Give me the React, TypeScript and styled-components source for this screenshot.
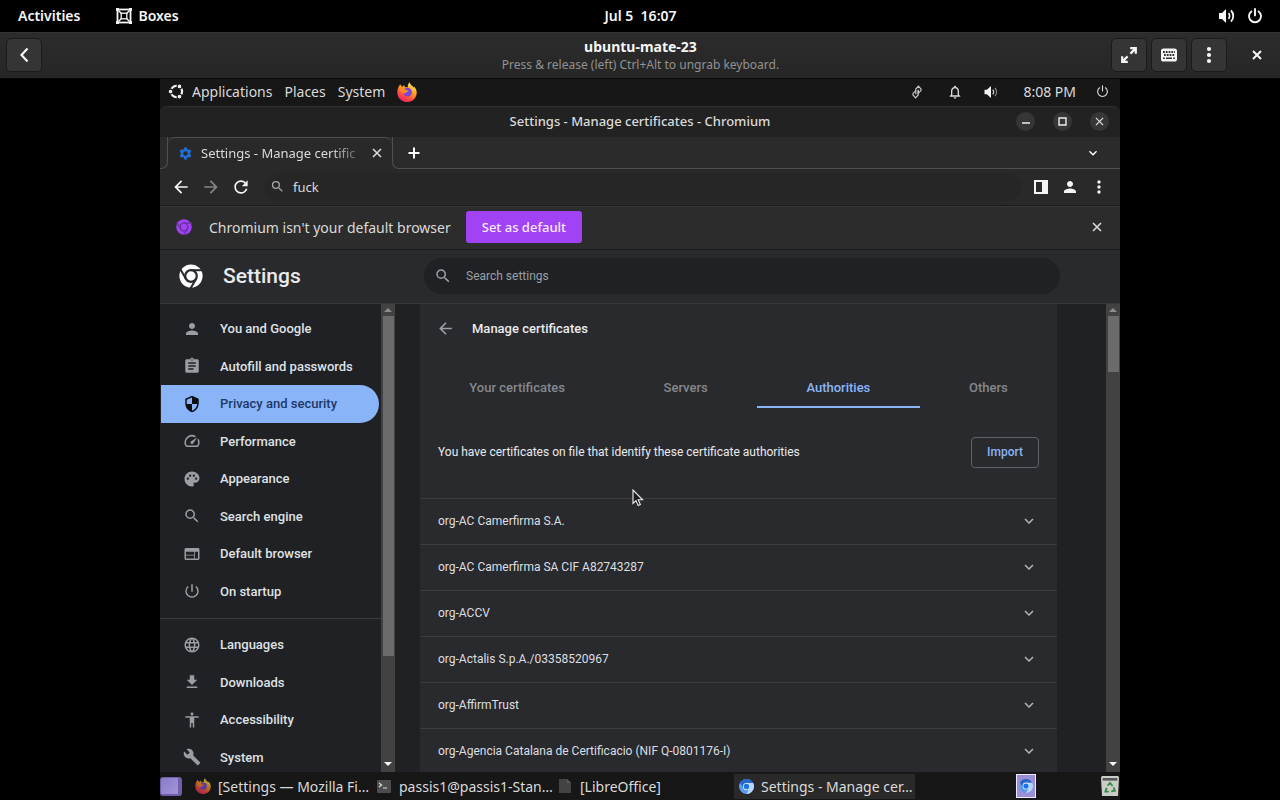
import React from "react";
import styled, { createGlobalStyle, css } from "styled-components";
import {
  MdPerson, MdAssignment, MdSecurity, MdSpeed, MdPalette, MdSearch, MdWeb,
  MdPowerSettingsNew, MdLanguage, MdDownload, MdAccessibility, MdBuild,
  MdArrowBack, MdArrowForward, MdRefresh, MdExpandMore,
  MdMoreVert, MdSettings, MdNotificationsNone,
} from "react-icons/md";
import type { IconType } from "react-icons";

const GNOME = `"Noto Sans", "Open Sans", sans-serif`;
const MATE = `"Noto Sans", "Open Sans", sans-serif`;
const WEB = `Roboto, "Liberation Sans", sans-serif`;

const GlobalStyle = createGlobalStyle`
  * { box-sizing: border-box; }
  body { margin: 0; background: #000; }
  button, input { font: inherit; color: inherit; background: none; border: 0; padding: 0; margin: 0; outline: 0; }
  h1, h2, p, ul { margin: 0; padding: 0; font: inherit; }
  ul { list-style: none; }
  a { color: inherit; text-decoration: none; }
  svg { display: block; flex: none; }
`;

/* ---------- host desktop ---------- */

const Desktop = styled.div`
  display: flex;
  flex-direction: column;
  height: 100vh;
  overflow: hidden;
  background: #000;
  color: #f6f6f6;
  font-family: ${GNOME};
`;

const ThreeColumns = css`
  display: grid;
  grid-template-columns: 1fr auto 1fr;
  align-items: center;
`;

const TopBar = styled.header`
  ${ThreeColumns}
  flex: none;
  height: 32px;
  padding: 0 17px 1px 18px;
  font-size: 14px;
  font-weight: 600;
  white-space: pre;
`;

const Cluster = styled.div<{ $gap: number; $end?: boolean }>`
  display: flex;
  align-items: center;
  gap: ${(p) => p.$gap}px;
  justify-content: ${(p) => (p.$end ? "flex-end" : "flex-start")};
`;

const TopButton = styled.button`
  display: flex;
  align-items: center;
  gap: 6px;
  font-weight: 600;
`;

const HeaderBar = styled.div`
  ${ThreeColumns}
  flex: none;
  height: 47px;
  padding: 0 5px 0 6px;
  background: linear-gradient(#2c2c2c, #262626);
  border-top: 1px solid #343434;
  border-bottom: 1px solid #070707;
`;

const BoxTitle = styled.div`
  display: flex;
  flex-direction: column;
  align-items: center;
`;

const BoxName = styled.h1`
  font-size: 14px;
  line-height: 18px;
  font-weight: 700;
`;

const BoxHint = styled.p`
  font-size: 12px;
  line-height: 18px;
  color: #919191;
`;

const HeaderButton = styled.button<{ $flat?: boolean }>`
  display: flex;
  align-items: center;
  justify-content: center;
  width: 36px;
  height: 34px;
  margin-bottom: 2px;
  margin-left: ${(p) => (p.$flat ? 8 : 0)}px;
  border-radius: 5px;
  border: 1px solid ${(p) => (p.$flat ? "transparent" : "#1b1b1b")};
  background: ${(p) => (p.$flat ? "transparent" : "#353535")};
`;

/* ---------- guest desktop ---------- */

const Guest = styled.main`
  display: flex;
  flex-direction: column;
  flex: 1;
  min-height: 0;
  width: 75%;
  margin: 0 auto;
  background: #171717;
  color: #dadada;
  font-family: ${MATE};
  font-size: 14px;
`;

const MatePanel = styled.div`
  display: flex;
  flex: none;
  align-items: center;
  justify-content: space-between;
  height: 27px;
  padding: 0 11px 2px 8px;
`;

const PanelButton = styled.button`
  display: flex;
  align-items: center;
  gap: 7px;
`;

const Clock = styled.span`
  margin-left: 4px;
`;

const Window = styled.section`
  display: flex;
  flex-direction: column;
  flex: 1;
  min-height: 0;
  overflow: hidden;
  border-radius: 6px 6px 0 0;
  background: #202124;
`;

const TitleBar = styled.div`
  ${ThreeColumns}
  flex: none;
  height: 31px;
  padding: 0 11px 2px;
  background: #222;
  border-top: 1px solid #303030;
  font-size: 13px;
  font-weight: 500;
`;

const WindowButton = styled.button`
  display: flex;
  align-items: center;
  justify-content: center;
  width: 19px;
  height: 19px;
  border-radius: 50%;
  background: #363636;
`;

const TabStrip = styled.div`
  display: flex;
  flex: none;
  align-items: stretch;
  height: 32px;
  background: #2b2b2b;
  font-size: 13px;
`;

const StripEdge = styled.div`
  width: 8px;
  border: solid #505050;
  border-width: 0 1px 1px 0;
  border-radius: 0 0 7px 0;
`;

const StripRest = styled.div`
  display: flex;
  flex: 1;
  align-items: center;
  justify-content: space-between;
  padding: 0 19px 0 15px;
  border: solid #505050;
  border-width: 0 0 1px 1px;
  border-radius: 0 0 0 7px;
  color: #fff;
`;

const BrowserTab = styled.div`
  display: flex;
  align-items: center;
  gap: 8px;
  width: 224px;
  padding: 0 10px 1px;
  border-top: 1px solid #505050;
  border-radius: 7px 7px 0 0;
  background: #292929;
`;

const TabTitle = styled.span`
  flex: 1;
  white-space: nowrap;
  mask-image: linear-gradient(90deg, #000 80%, rgba(0, 0, 0, 0.1));
`;

const Toolbar = styled.div`
  display: flex;
  flex: none;
  align-items: center;
  gap: 10px;
  height: 37px;
  padding: 0 11px 1px;
  background: #292929;
  border-bottom: 1px solid #1b1b1b;
  color: #f4f4f4;
  font-size: 13px;
`;

const AddressBox = styled.label`
  display: flex;
  flex: 1;
  align-items: center;
  gap: 8px;
  height: 28px;
  margin-left: 4px;
  padding-left: 5px;
  border-radius: 14px;
  background: #262626;
  color: #dadada;
`;

const TextInput = styled.input`
  flex: 1;
  min-width: 0;
  &::placeholder { color: #9aa0a6; opacity: 1; }
`;

const InfoBar = styled.div`
  display: flex;
  flex: none;
  align-items: center;
  height: 44px;
  padding: 0 18px 2px 16px;
  background: #2c2c2c;
  border-top: 1px solid #383838;
  border-bottom: 1px solid #1b1b1b;
`;

const InfoText = styled.p`
  margin: 0 15px 0 17px;
  white-space: nowrap;
`;

const DefaultButton = styled.button`
  height: 32px;
  padding: 0 16px;
  border-radius: 3px;
  background: #a142f4;
  color: #f8ebff;
  font-size: 13px;
  font-weight: 500;
`;

const Spacer = styled.div`
  flex: 1;
`;

/* ---------- settings page ---------- */

const SettingsBar = styled.div`
  display: flex;
  flex: none;
  align-items: center;
  height: 54px;
  padding: 0 60px 2px 19px;
  background: #292a2d;
  border-bottom: 1px solid #37383b;
  color: #e8eaed;
  font-family: ${WEB};
`;

const SettingsTitle = styled.h2`
  width: 201px;
  margin-left: 20px;
  font-size: 21px;
  font-weight: 500;
`;

const SearchBox = styled.label`
  display: flex;
  flex: 1;
  align-items: center;
  gap: 14px;
  height: 36px;
  padding-left: 10px;
  border-radius: 18px;
  background: #202124;
  color: #9aa0a6;
  font-size: 12px;
`;

const SettingsBody = styled.div`
  display: flex;
  flex: 1;
  min-height: 0;
  background: #202124;
  color: #e8eaed;
  font-family: ${WEB};
`;

const SideNav = styled.nav`
  flex: none;
  width: 221px;
  overflow: hidden;
  padding-top: 6px;
`;

const MenuGroup = styled.ul<{ $height: number }>`
  display: flex;
  flex-direction: column;
  height: ${(p) => p.$height}px;
`;

const MenuItem = styled.li`
  display: flex;
  flex: 1;
`;

const MenuLink = styled.a<{ $active?: boolean }>`
  display: flex;
  flex: 1;
  align-items: center;
  gap: 19px;
  margin: 0 2px 0 1px;
  padding-left: 22px;
  border-radius: 0 19px 19px 0;
  font-size: 13px;
  font-weight: 500;
  background: ${(p) => (p.$active ? "#8ab4f8" : "transparent")};
  color: ${(p) => (p.$active ? "#1c3968" : "#dfe1e4")};
  svg { color: ${(p) => (p.$active ? "#0c0f14" : "#9a9da1")}; }
`;

const MenuRule = styled.hr`
  height: 1px;
  margin: 8px 0 7px;
  border: 0;
  background: #3a3b3e;
`;

const ScrollTrack = styled.div`
  display: flex;
  flex: none;
  flex-direction: column;
  align-items: center;
  width: 14px;
  padding-bottom: 2px;
  background: #424242;
`;

const ScrollThumb = styled.div<{ $share: number }>`
  width: 11px;
  height: ${(p) => p.$share}%;
  background: #6b6b6b;
`;

const ScrollArrow = styled.div<{ $down?: boolean }>`
  display: flex;
  align-items: center;
  height: 12px;
  margin-top: ${(p) => (p.$down ? "auto" : "0")};
  svg { transform: ${(p) => (p.$down ? "rotate(180deg)" : "none")}; }
`;

const Pane = styled.div`
  display: flex;
  flex: 1;
  min-width: 0;
  overflow: hidden;
  padding: 0 49px 0 25px;
`;

const Card = styled.section`
  position: relative;
  flex: 1;
  min-width: 0;
  background: #292a2d;
`;

const CardHeader = styled.div`
  display: flex;
  align-items: center;
  gap: 17px;
  height: 48px;
  padding-left: 16px;
  font-size: 13px;
  font-weight: 500;
`;

const BackButton = styled.button`
  color: #9aa0a6;
`;

const CertTabs = styled.div`
  display: flex;
  height: 40px;
  margin-top: 16px;
`;

const CertTab = styled.button<{ $active?: boolean }>`
  flex: 1 1 auto;
  border-bottom: 2px solid ${(p) => (p.$active ? "#8ab4f8" : "transparent")};
  color: ${(p) => (p.$active ? "#8ab4f8" : "#85888c")};
  font-size: 13px;
  font-weight: 500;
`;

const ImportRow = styled.div`
  display: flex;
  align-items: center;
  justify-content: space-between;
  height: 90px;
  padding: 0 18px 2px;
  font-size: 12px;
`;

const ImportButton = styled.button`
  height: 31px;
  padding: 0 15px;
  border: 1px solid #5f6368;
  border-radius: 4px;
  color: #8ab4f8;
  font-weight: 500;
`;

const CertRow = styled.button`
  display: flex;
  align-items: center;
  justify-content: space-between;
  width: 100%;
  height: 46px;
  padding: 0 19px 2px 18px;
  border-top: 1px solid #3c3d40;
  color: #dcdee1;
  font-size: 12px;
  text-align: left;
`;

const Pointer = styled.svg`
  position: absolute;
  left: 212px;
  top: 185px;
`;

/* ---------- guest task bar ---------- */

const TaskBar = styled.div`
  display: flex;
  flex: none;
  align-items: center;
  height: 28px;
  background: #171717;
`;

const Task = styled.button<{ $active?: boolean }>`
  display: flex;
  flex: none;
  align-items: center;
  gap: 7px;
  width: 181px;
  height: 25px;
  padding-left: 4px;
  background: ${(p) => (p.$active ? "#292929" : "transparent")};
  white-space: nowrap;
`;

const TaskIcon = styled.span`
  display: flex;
  justify-content: center;
  width: 16px;
`;

const ShowDesktop = styled.button`
  width: 22px;
  height: 19px;
  margin-right: 9px;
  border-radius: 3px;
  border: solid #6f5fa8;
  border-width: 1px 4px 2px 1px;
  background: linear-gradient(135deg, #8b7bc8, #a394da);
`;

const Workspace = styled.button`
  display: flex;
  align-items: center;
  justify-content: center;
  width: 20px;
  height: 24px;
  margin-right: 64px;
  border: 1px solid #efeaff;
  background: #9d8fd6;
`;

/* ---------- drawings ---------- */

const ChromiumMono = ({ size, color, gap }: { size: number; color: string; gap: string }) => (
  <svg width={size} height={size} viewBox="0 0 24 24">
    <circle cx="12" cy="12" r="11.6" fill={color} />
    <g stroke={gap} strokeWidth="2" fill="none">
      <circle cx="12" cy="12" r="5.8" strokeWidth="2.2" />
      <path d="M12 6.200H24" />
      <path d="M12 6.200H24" transform="rotate(120 12 12)" />
      <path d="M12 6.200H24" transform="rotate(240 12 12)" />
    </g>
  </svg>
);

const ChromiumColor = ({ size }: { size: number }) => (
  <svg width={size} height={size} viewBox="0 0 24 24">
    <circle cx="12" cy="12" r="12" fill="#5c9cf0" />
    <path d="M12 12 7.2 14.7 1.6 6A12 12 0 0 1 22.4 6.3H12Z" fill="#2a66c4" />
    <path d="M12 6.3H22.6A12 12 0 0 1 12 24l5-9Z" fill="#b9d3fa" />
    <circle cx="12" cy="12" r="5.8" fill="#eaf2ff" />
    <circle cx="12" cy="12" r="4.5" fill="#1a73e8" />
  </svg>
);

const Firefox = ({ size, dim }: { size: number; dim?: boolean }) => (
  <svg width={size} height={size} viewBox="0 0 24 24" opacity={dim ? 0.7 : 1}>
    <defs>
      <linearGradient id="fox" x1="0.8" y1="0" x2="0.25" y2="1">
        <stop offset="0" stopColor="#fff36b" />
        <stop offset="0.4" stopColor="#ffa21f" />
        <stop offset="0.7" stopColor="#ff5040" />
        <stop offset="1" stopColor="#e91a74" />
      </linearGradient>
    </defs>
    <path d="M2.4 5.2 3.7 2.6 6.2 6 8.4 3.6 9.6 6.2 13 6.4C12.6 3.6 14 1.2 15.2.3 15.6 2.6 17 3.6 18.8 5.2 19.6 6 20 6.8 20 6.8L20.4 5.4C22.8 7.8 24 11 23.6 13.8 23 19.8 18 24 12 24 5.6 24 .4 19 .4 12.8.4 9.8 1 7.2 2.4 5.2Z" fill="url(#fox)" />
    <circle cx="12.6" cy="12.2" r="5.2" fill="#7a46d8" />
    <path d="M3.4 8.6C6 7 9 8 10.6 9.6 12.6 9.6 13.6 10.2 13.4 11 12.4 12.4 10.6 11.8 10 13.6 7 14 4 12 3.4 8.6Z" fill="#ff8a2a" />
  </svg>
);

const BoxesIcon = () => (
  <svg width="16" height="16" viewBox="0 0 16 16" fill="none" stroke="#f6f6f6">
    <rect x="1.5" y="1.5" width="13" height="13" strokeWidth="1.8" />
    <rect x="5.2" y="5.2" width="5.6" height="5.6" strokeWidth="1.3" />
    <path d="M2 2l3.4 3.4M14 2l-3.4 3.4M2 14l3.4-3.4M14 14l-3.4-3.4" strokeWidth="1.4" />
    <path d="M0 1.5h3M13 1.5h3M0 14.5h3M13 14.5h3" strokeWidth="3" />
  </svg>
);

const SoundIcon = ({ size }: { size: number }) => (
  <svg width={size} height={size} viewBox="0 0 16 16" fill="none" stroke="currentColor" strokeWidth="1.8">
    <path d="M0 5h3l4-4v14l-4-4H0Z" fill="currentColor" stroke="none" />
    <path d="M9.5 5.2c1.4 1.5 1.4 4 0 5.6" />
    <path d="M12 2.5c3 3 3 8 0 11" />
  </svg>
);

const GuestSound = () => (
  <svg width="16" height="14" viewBox="0 0 16 14" fill="none" stroke="#8f8f8f" strokeWidth="1.2">
    <path d="M1.5 4.8h2.4L8 1v12L3.9 9.2H1.5Z" fill="#f2f2f2" stroke="none" />
    <path d="M9.8 4.6c1 1.3 1 3.5 0 4.8" stroke="#c8c8c8" />
    <path d="M12 2.8c2 2.4 2 6 0 8.4" />
  </svg>
);

const PowerIcon = ({ size, stroke }: { size: number; stroke: number }) => (
  <svg width={size} height={size} viewBox="0 0 16 16" fill="none" stroke="currentColor" strokeWidth={stroke} strokeLinecap="round">
    <path d="M4.4 3.4a6 6 0 1 0 7.2 0M8 1v6.4" />
  </svg>
);

const ExpandIcon = () => (
  <svg width="18" height="18" viewBox="0 0 18 18" fill="none" stroke="#f6f6f6" strokeWidth="2.2">
    <path d="M10.2 2.2H15.8V7.8M15.4 2.6 10.4 7.6M7.8 15.8H2.2V10.2M2.6 15.4l5-5" />
  </svg>
);

const KeyboardIcon = () => (
  <svg width="16" height="14" viewBox="0 0 16 14">
    <rect width="16" height="13" y="0.5" rx="2.6" fill="#f6f6f6" />
    <path d="M2 4h12M3 7h11" stroke="#333" strokeWidth="1.8" strokeDasharray="1.8 1" />
    <path d="M2 10.2h1.8M5 10.2h6M12.2 10.2H14" stroke="#333" strokeWidth="1.6" />
  </svg>
);

const DotsIcon = () => (
  <svg width="6" height="18" viewBox="0 0 6 18" fill="#f6f6f6">
    <circle cx="3" cy="3" r="2.1" />
    <circle cx="3" cy="9" r="2.1" />
    <circle cx="3" cy="15" r="2.1" />
  </svg>
);

const CrossIcon = ({ size, stroke }: { size: number; stroke: number }) => (
  <svg width={size} height={size} viewBox="0 0 10 10" stroke="currentColor" strokeWidth={stroke}>
    <path d="M1 1l8 8M9 1 1 9" />
  </svg>
);

const PlusIcon = () => (
  <svg width="12" height="12" viewBox="0 0 12 12" stroke="currentColor" strokeWidth="2">
    <path d="M6 0.500v11M0.500 6h11" />
  </svg>
);

const ChevronLeft = () => (
  <svg width="10" height="16" viewBox="0 0 10 16" fill="none" stroke="#f6f6f6" strokeWidth="2.2">
    <path d="M8.5 1.5 2.5 8l6 6.5" />
  </svg>
);

const UbuntuMate = () => (
  <svg width="17" height="17" viewBox="0 0 17 17">
    <circle cx="8.5" cy="8.5" r="5.6" fill="none" stroke="#f2f2f2" strokeWidth="2.2" />
    <g fill="#f2f2f2" stroke="#171717" strokeWidth="1.1">
      <circle cx="2.6" cy="8.5" r="2.4" />
      <circle cx="11.5" cy="3.4" r="2.4" />
      <circle cx="11.5" cy="13.6" r="2.4" />
    </g>
  </svg>
);

const LinkIcon = () => (
  <svg width="20" height="14" viewBox="-4 0 20 14" fill="none" stroke="#c8c8c8" strokeWidth="1.2">
    <path d="M4.8 9.2V4L7.4 1.2 10 4v1.6L7.2 8.4V5.400" />
    <path d="M7.2 4.800V10L4.600 12.800 2 10V8.400L4.800 5.600" />
  </svg>
);

const SidePanelIcon = () => (
  <svg width="20" height="14" viewBox="-3 0 20 14" fill="#f4f4f4">
    <path d="M0 0h14v14H0ZM2 2v10h6V2Z" fillRule="evenodd" />
  </svg>
);

const TerminalIcon = () => (
  <svg width="14" height="13" viewBox="0 0 14 13">
    <rect width="14" height="13" rx="1" fill="#4d4d4d" />
    <path d="M2 3l2.6 2L2 7M6 8h4" stroke="#ddd" strokeWidth="1.2" fill="none" />
  </svg>
);

const DocumentIcon = () => (
  <svg width="12" height="14" viewBox="0 0 12 14">
    <path d="M0 0h8l4 4v10H0Z" fill="#434343" />
    <path d="M8 0v4h4Z" fill="#5a5a5a" />
  </svg>
);

const TrashIcon = () => (
  <svg width="20" height="22" viewBox="0 0 20 22">
    <path d="M1 2.5Q1 1 2.5 1h15Q19 1 19 2.5L18 21H2Z" fill="#c9cfc6" />
    <rect x="2.6" y="3" width="14.8" height="2.6" fill="#55585a" />
    <g fill="none" stroke="#3f8a4a" strokeWidth="1.9">
      <path d="M7.6 10.6 10 8l2.6 3" />
      <path d="M13.6 12.4l1.2 3.4-3.6.6" />
      <path d="M8.8 16.6H5.4l1.2-3.8" />
    </g>
  </svg>
);

const Triangle = ({ color }: { color: string }) => (
  <svg width="8" height="4" viewBox="0 0 8 4" fill={color}>
    <path d="M0 4 4 0l4 4Z" />
  </svg>
);

/* ---------- data ---------- */

type Entry = { icon: IconType; label: string; active?: boolean };

const primary: Entry[] = [
  { icon: MdPerson, label: "You and Google" },
  { icon: MdAssignment, label: "Autofill and passwords" },
  { icon: MdSecurity, label: "Privacy and security", active: true },
  { icon: MdSpeed, label: "Performance" },
  { icon: MdPalette, label: "Appearance" },
  { icon: MdSearch, label: "Search engine" },
  { icon: MdWeb, label: "Default browser" },
  { icon: MdPowerSettingsNew, label: "On startup" },
];

const secondary: Entry[] = [
  { icon: MdLanguage, label: "Languages" },
  { icon: MdDownload, label: "Downloads" },
  { icon: MdAccessibility, label: "Accessibility" },
  { icon: MdBuild, label: "System" },
];

const certTabs = ["Your certificates", "Servers", "Authorities", "Others"];

const authorities = [
  "org-AC Camerfirma S.A.",
  "org-AC Camerfirma SA CIF A82743287",
  "org-ACCV",
  "org-Actalis S.p.A./03358520967",
  "org-AffirmTrust",
  "org-Agencia Catalana de Certificacio (NIF Q-0801176-I)",
];

const Menu = ({ entries, height }: { entries: Entry[]; height: number }) => (
  <MenuGroup $height={height}>
    {entries.map(({ icon: Icon, label, active }) => (
      <MenuItem key={label}>
        <MenuLink href="#" $active={active}>
          <Icon size={18} />
          {label}
        </MenuLink>
      </MenuItem>
    ))}
  </MenuGroup>
);

const ScrollBar = ({ share }: { share: number }) => (
  <ScrollTrack>
    <ScrollArrow><Triangle color="#8d8d8d" /></ScrollArrow>
    <ScrollThumb $share={share} />
    <ScrollArrow $down><Triangle color="#f4f4f4" /></ScrollArrow>
  </ScrollTrack>
);

export default function App() {
  return (
    <Desktop>
      <GlobalStyle />
      <TopBar>
        <Cluster $gap={36}>
          <TopButton>Activities</TopButton>
          <TopButton><BoxesIcon />Boxes</TopButton>
        </Cluster>
        <TopButton>{"Jul 5  16:07"}</TopButton>
        <Cluster $gap={12} $end>
          <SoundIcon size={16} />
          <PowerIcon size={16} stroke={1.9} />
        </Cluster>
      </TopBar>

      <HeaderBar>
        <Cluster $gap={4}>
          <HeaderButton aria-label="Back"><ChevronLeft /></HeaderButton>
        </Cluster>
        <BoxTitle>
          <BoxName>ubuntu-mate-23</BoxName>
          <BoxHint>Press &amp; release (left) Ctrl+Alt to ungrab keyboard.</BoxHint>
        </BoxTitle>
        <Cluster $gap={4} $end>
          <HeaderButton aria-label="Fullscreen"><ExpandIcon /></HeaderButton>
          <HeaderButton aria-label="Keyboard"><KeyboardIcon /></HeaderButton>
          <HeaderButton aria-label="Menu"><DotsIcon /></HeaderButton>
          <HeaderButton aria-label="Close" $flat><CrossIcon size={10} stroke={2} /></HeaderButton>
        </Cluster>
      </HeaderBar>

      <Guest>
        <MatePanel>
          <Cluster $gap={12}>
            <PanelButton><UbuntuMate />Applications</PanelButton>
            <PanelButton>Places</PanelButton>
            <PanelButton>System</PanelButton>
            <PanelButton aria-label="Firefox"><Firefox size={20} /></PanelButton>
          </Cluster>
          <Cluster $gap={20}>
            <LinkIcon />
            <MdNotificationsNone size={16} />
            <GuestSound />
            <Clock>8:08 PM</Clock>
            <PowerIcon size={13} stroke={1.4} />
          </Cluster>
        </MatePanel>

        <Window>
          <TitleBar>
            <span />
            <span>Settings - Manage certificates - Chromium</span>
            <Cluster $gap={18} $end>
              <WindowButton aria-label="Minimize">
                <svg width="8" height="10" viewBox="0 0 8 10"><path d="M0 7h8" stroke="#eee" strokeWidth="1.4" /></svg>
              </WindowButton>
              <WindowButton aria-label="Maximize">
                <svg width="9" height="9" viewBox="0 0 9 9"><path d="M1 1h7v7H1Z" fill="none" stroke="#eee" strokeWidth="1.4" /></svg>
              </WindowButton>
              <WindowButton aria-label="Close window"><CrossIcon size={9} stroke={1.4} /></WindowButton>
            </Cluster>
          </TitleBar>

          <TabStrip>
            <StripEdge />
            <BrowserTab>
              <MdSettings size={15} color="#1f6fd6" />
              <TabTitle>Settings - Manage certific</TabTitle>
              <CrossIcon size={10} stroke={1.6} />
            </BrowserTab>
            <StripRest>
              <PlusIcon />
              <MdExpandMore size={16} />
            </StripRest>
          </TabStrip>

          <Toolbar>
            <MdArrowBack size={20} />
            <MdArrowForward size={20} color="#858585" />
            <MdRefresh size={20} />
            <AddressBox>
              <MdSearch size={15} color="#a8a8a8" />
              <TextInput aria-label="Address" defaultValue="fuck" />
            </AddressBox>
            <SidePanelIcon />
            <MdPerson size={18} />
            <MdMoreVert size={20} />
          </Toolbar>

          <InfoBar>
            <ChromiumMono size={16} color="#a142f4" gap="#6a31a0" />
            <InfoText>Chromium isn't your default browser</InfoText>
            <DefaultButton>Set as default</DefaultButton>
            <Spacer />
            <CrossIcon size={10} stroke={1.6} />
          </InfoBar>

          <SettingsBar>
            <ChromiumMono size={24} color="#fff" gap="#292a2d" />
            <SettingsTitle>Settings</SettingsTitle>
            <SearchBox>
              <MdSearch size={18} />
              <TextInput aria-label="Search settings" placeholder="Search settings" />
            </SearchBox>
          </SettingsBar>

          <SettingsBody>
            <SideNav>
              <Menu entries={primary} height={300} />
              <MenuRule />
              <Menu entries={secondary} height={150} />
            </SideNav>
            <ScrollBar share={73} />
            <Pane>
              <Card>
                <CardHeader>
                  <BackButton aria-label="Back to security"><MdArrowBack size={19} /></BackButton>
                  <h2>Manage certificates</h2>
                </CardHeader>
                <CertTabs role="tablist">
                  {certTabs.map((name) => (
                    <CertTab key={name} role="tab" $active={name === "Authorities"}>{name}</CertTab>
                  ))}
                </CertTabs>
                <ImportRow>
                  <p>You have certificates on file that identify these certificate authorities</p>
                  <ImportButton>Import</ImportButton>
                </ImportRow>
                {authorities.map((name) => (
                  <CertRow key={name}>
                    {name}
                    <MdExpandMore size={18} color="#b4b7ba" />
                  </CertRow>
                ))}
                <Pointer width="12" height="18" viewBox="0 0 12 18">
                  <path d="M1 1v13.4l3-2.8 2.2 5 2.2-1-2.2-4.8h4.4Z" fill="#1c1c1e" stroke="#eee" strokeWidth="1.1" />
                </Pointer>
              </Card>
            </Pane>
            <ScrollBar share={12} />
          </SettingsBody>
        </Window>

        <TaskBar>
          <ShowDesktop aria-label="Show desktop" />
          <Task><TaskIcon><Firefox size={16} dim /></TaskIcon>[Settings — Mozilla Fi…</Task>
          <Task><TaskIcon><TerminalIcon /></TaskIcon>passis1@passis1-Stan…</Task>
          <Task><TaskIcon><DocumentIcon /></TaskIcon>[LibreOffice]</Task>
          <Task $active><TaskIcon><ChromiumColor size={15} /></TaskIcon>Settings - Manage cer…</Task>
          <Spacer />
          <Workspace aria-label="Workspace 1"><ChromiumColor size={14} /></Workspace>
          <TrashIcon />
        </TaskBar>
      </Guest>
    </Desktop>
  );
}
